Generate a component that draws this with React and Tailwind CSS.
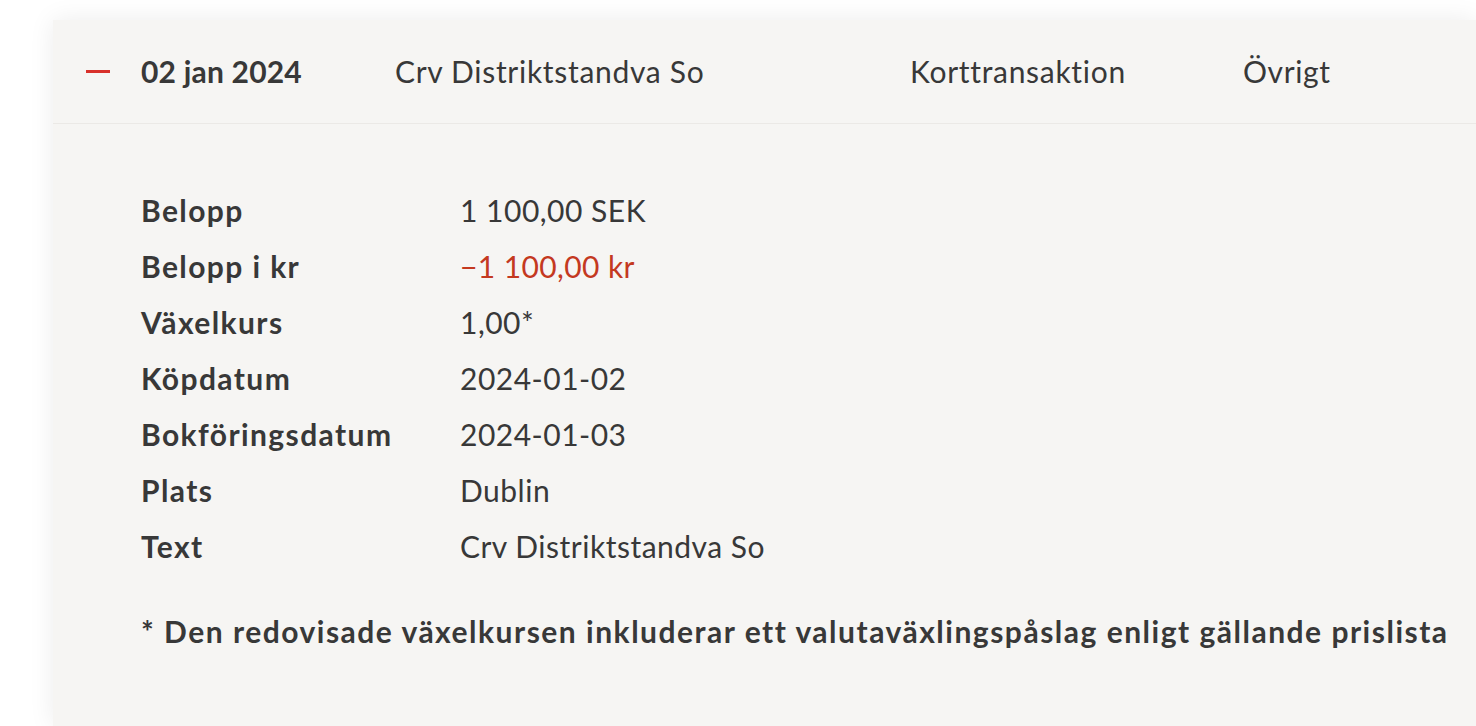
import React from 'react';

const rows = [
    { label: 'Belopp', value: '1 100,00 SEK' },
    { label: 'Belopp i kr', value: '−1 100,00 kr', negative: true },
    { label: 'Växelkurs', value: '1,00*' },
    { label: 'Köpdatum', value: '2024-01-02' },
    { label: 'Bokföringsdatum', value: '2024-01-03' },
    { label: 'Plats', value: 'Dublin' },
    { label: 'Text', value: 'Crv Distriktstandva So' },
];

export default function App() {
    return (
        <div
            className="min-h-[726px] bg-white pt-[20px] pl-[53px] overflow-hidden text-[#383838]"
            style={{ fontFamily: 'Lato, "Noto Sans", sans-serif' }}
        >
            <div className="bg-[#f6f5f3] min-h-[706px] shadow-[0_0_24px_rgba(0,0,0,0.08)]">
                {/* transaction header */}
                <div className="flex items-center h-[104px] border-b border-[#ebe9e6] text-[30px]">
                    <div className="w-[88px] pl-[33px] flex items-center">
                        <span className="block w-[24px] h-[3px] bg-[#d8302a]" />
                    </div>
                    <div className="w-[254px] font-bold tracking-[0.2px]">02 jan 2024</div>
                    <div className="w-[515px] tracking-[0.7px]">Crv Distriktstandva So</div>
                    <div className="w-[333px] tracking-[0.7px]">Korttransaktion</div>
                    <div className="tracking-[0.6px]">Övrigt</div>
                </div>

                {/* details */}
                <div className="pl-[88px] pt-[58px] text-[30px]">
                    {rows.map((r) => (
                        <div key={r.label} className="flex h-[56px] items-center">
                            <div className="w-[319px] font-bold tracking-[1.4px]">{r.label}</div>
                            <div className={r.negative ? 'text-[#c4391f] tracking-[0.4px]' : 'tracking-[0.5px]'}>
                                {r.value}
                            </div>
                        </div>
                    ))}
                    <p className="mt-[37px] font-bold leading-[40px] tracking-[1.5px] whitespace-nowrap">
                        * Den redovisade växelkursen inkluderar ett valutaväxlingspåslag enligt gällande prislista
                    </p>
                </div>
            </div>
        </div>
    );
}
